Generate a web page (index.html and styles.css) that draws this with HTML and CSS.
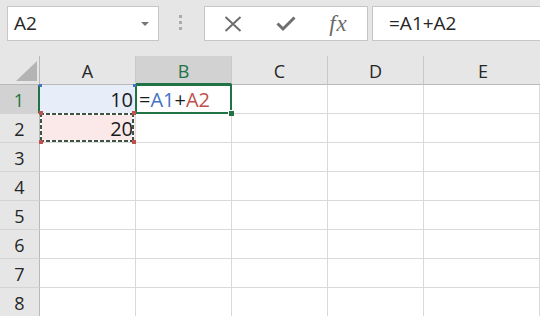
FILE: index.html
```html
<!DOCTYPE html>
<html>
<head>
<meta charset="utf-8">
<link rel="stylesheet" href="styles.css">
</head>
<body>
<div class="toolbar">
  <div class="namebox"><span class="name">A2</span><span class="caret"></span></div>
  <div class="grip"><i></i><i></i><i></i></div>
  <div class="buttons">
    <span class="btn"><svg width="18" height="16" viewBox="0 0 18 16"><path d="M1.5 1 L16.5 15 M16.5 1 L1.5 15" stroke="#6f6f6f" stroke-width="2" fill="none"/></svg></span>
    <span class="btn"><svg width="20" height="17" viewBox="0 0 20 17"><path d="M1.5 8.5 L7 14 L18.5 2.5" stroke="#6f6f6f" stroke-width="3" fill="none"/></svg></span>
    <span class="btn fx">fx</span>
  </div>
  <div class="formula">=A1+A2</div>
</div>
<div class="sheet">
  <div class="hd corner"><svg width="21" height="20" viewBox="0 0 21 20"><polygon points="21,0 21,20 0,20" fill="#b4b4b4"/></svg></div>
  <div class="hd col">A</div>
  <div class="hd col on">B</div>
  <div class="hd col">C</div>
  <div class="hd col">D</div>
  <div class="hd col last">E</div>

  <div class="hd row on">1</div>
  <div class="cell num ref-blue">10<i class="bc tl"></i><i class="bc tr"></i></div>
  <div class="cell active"><span>=</span><span class="blue">A1</span><span>+</span><span class="red">A2</span><i class="handle"></i></div>
  <div class="cell"></div><div class="cell"></div><div class="cell"></div>

  <div class="hd row">2</div>
  <div class="cell num ref-red">20<i class="ants"></i><i class="rc tl"></i><i class="rc tr"></i><i class="rc bl"></i><i class="rc br"></i></div>
  <div class="cell"></div><div class="cell"></div><div class="cell"></div><div class="cell"></div>

  <div class="hd row">3</div>
  <div class="cell"></div><div class="cell"></div><div class="cell"></div><div class="cell"></div><div class="cell"></div>
  <div class="hd row">4</div>
  <div class="cell"></div><div class="cell"></div><div class="cell"></div><div class="cell"></div><div class="cell"></div>
  <div class="hd row">5</div>
  <div class="cell"></div><div class="cell"></div><div class="cell"></div><div class="cell"></div><div class="cell"></div>
  <div class="hd row">6</div>
  <div class="cell"></div><div class="cell"></div><div class="cell"></div><div class="cell"></div><div class="cell"></div>
  <div class="hd row">7</div>
  <div class="cell"></div><div class="cell"></div><div class="cell"></div><div class="cell"></div><div class="cell"></div>
  <div class="hd row">8</div>
  <div class="cell"></div><div class="cell"></div><div class="cell"></div><div class="cell"></div><div class="cell"></div>
</div>
</body>
</html>
```
FILE: styles.css
```css
html, body {
  margin: 0;
  padding: 0;
  width: 540px;
  height: 316px;
  overflow: hidden;
  background: #e6e6e6;
  font-family: "Open Sans", "Noto Sans", sans-serif;
  color: #222;
}
.toolbar {
  height: 56px;
  box-sizing: border-box;
  padding: 6px 0 0 7px;
  display: flex;
  align-items: flex-start;
  background: #e6e6e6;
}
.namebox {
  width: 152px;
  height: 35px;
  box-sizing: border-box;
  border: 1px solid #c6c6c6;
  background: #fff;
  display: flex;
  align-items: center;
  padding: 0 9px 0 6px;
  flex: none;
}
.name {
  font-size: 19px;
  line-height: 33px;
  color: #262626;
}
.caret {
  margin-left: auto;
  width: 0;
  height: 0;
  border-left: 4px solid transparent;
  border-right: 4px solid transparent;
  border-top: 4px solid #777;
}
.grip {
  width: 45px;
  flex: none;
  box-sizing: border-box;
  padding: 9px 0 0 20px;
  display: flex;
  flex-direction: column;
  gap: 3px;
}
.grip i {
  display: block;
  width: 3px;
  height: 3px;
  background: #ababab;
}
.buttons {
  width: 164px;
  height: 35px;
  box-sizing: border-box;
  border: 1px solid #c6c6c6;
  background: #fff;
  display: flex;
  padding-left: 1px;
  flex: none;
}
.btn {
  width: 53px;
  display: flex;
  align-items: center;
  justify-content: center;
}
.fx {
  font-family: "Liberation Serif", "DejaVu Serif", serif;
  font-style: italic;
  font-size: 23px;
  color: #6a6a6a;
  letter-spacing: 1px;
}
.formula {
  margin-left: 4px;
  flex: 1;
  min-width: 0;
  height: 35px;
  box-sizing: border-box;
  border: 1px solid #c6c6c6;
  border-right: none;
  background: #fff;
  padding-left: 16px;
  font-size: 19px;
  line-height: 33px;
  color: #262626;
  white-space: nowrap;
}
.sheet {
  display: grid;
  grid-template-columns: 40px 96px 96px 96px 96px 116px;
  grid-auto-rows: 29px;
  background: #fff;
}
.hd {
  background: #e6e6e6;
  box-sizing: border-box;
  font-size: 18px;
  color: #262626;
  text-align: center;
  line-height: 28px;
}
.col {
  border-right: 1px solid #c8c8c8;
  border-bottom: 1px solid #b9b9b9;
  padding-top: 1px;
}
.col.last {
  border-right: none;
  padding-left: 2px;
}
.corner {
  border-right: 1px solid #b9b9b9;
  border-bottom: 1px solid #b9b9b9;
  display: flex;
  justify-content: flex-end;
  align-items: flex-end;
  padding: 0 2px 3px 0;
}
.corner svg { display: block; }
.row {
  border-right: 1px solid #b9b9b9;
  border-bottom: 1px solid #d4d4d4;
  padding-top: 1px;
}
.hd.on {
  background: #d2d2d2;
  color: #217346;
}
.col.on {
  border-bottom: 2px solid #217346;
}
.row.on {
  border-right: 2px solid #217346;
}
.cell {
  box-sizing: border-box;
  border-right: 1px solid #d9d9d9;
  border-bottom: 1px solid #d9d9d9;
  font-size: 20px;
  line-height: 28px;
  padding: 1px 2px 0 3px;
  white-space: nowrap;
  color: #1a1a1a;
  position: relative;
}
.num { text-align: right; }
.ref-blue { background: #e8eef9; }
.ref-red { background: #fbe9e9; }
.blue { color: #4472c4; }
.red { color: #c0504d; }
.active::after {
  content: "";
  position: absolute;
  left: -1px;
  top: -1px;
  right: -1px;
  bottom: -1px;
  border: 2px solid #217346;
  z-index: 2;
}
.handle {
  position: absolute;
  right: -3px;
  bottom: -3px;
  width: 5px;
  height: 5px;
  background: #217346;
  border-left: 1px solid #fff;
  border-top: 1px solid #fff;
  z-index: 3;
}
.ants {
  position: absolute;
  left: 0;
  top: -1px;
  right: 1px;
  bottom: 0;
  z-index: 2;
  background:
    repeating-linear-gradient(90deg, #3e5444 0 4px, #fff 4px 6px) top left / 100% 2px no-repeat,
    repeating-linear-gradient(90deg, #3e5444 0 4px, #fff 4px 6px) bottom left / 100% 2px no-repeat,
    repeating-linear-gradient(180deg, #3e5444 0 4px, #fff 4px 6px) top left / 2px 100% no-repeat,
    repeating-linear-gradient(180deg, #3e5444 0 4px, #fff 4px 6px) top right / 2px 100% no-repeat;
}
.rc, .bc {
  position: absolute;
  z-index: 3;
}
.rc {
  width: 4px;
  height: 4px;
  background: #c0504d;
}
.rc.tl { left: -1px; top: -3px; }
.rc.tr { right: -1px; top: -3px; }
.rc.bl { left: -1px; bottom: -2px; }
.rc.br { right: -1px; bottom: -2px; }
.bc {
  width: 3px;
  height: 3px;
  background: #4472c4;
}
.bc.tl { left: -1px; top: -1px; }
.bc.tr { right: -1px; top: -1px; }
```
